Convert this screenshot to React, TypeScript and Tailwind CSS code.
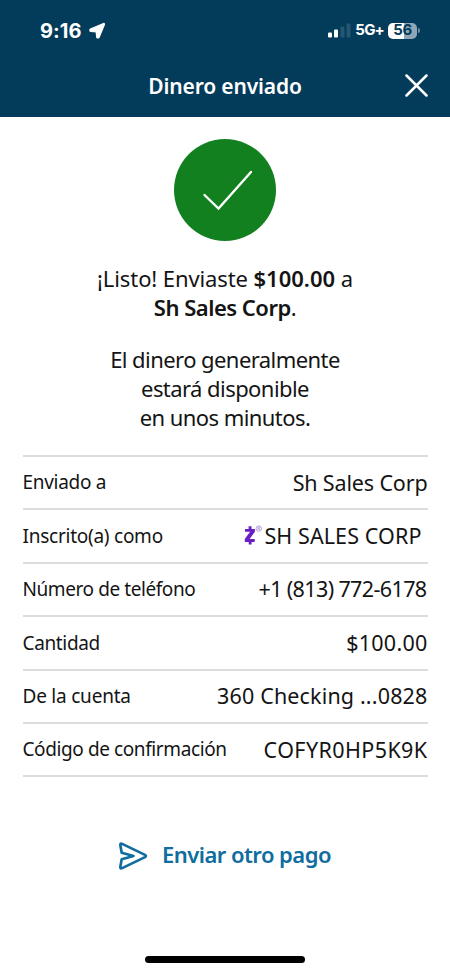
import type { ReactNode } from 'react'

interface DetailRow {
  label: string
  value: ReactNode
  labelClass: string
  valueClass: string
}

function ZelleMark() {
  return (
    <svg width="18" height="22" viewBox="0 0 18 22" className="mr-[2px] shrink-0">
      <path
        d="M1 3.9h3.6V1.2h2.9v2.7h3.4v2.9L5.6 14.1h5.1v2.8H7.6v2.7H4.7v-2.7H.8V14l5.3-7.2H1Z"
        fill="#6a1fc2"
      />
      <circle cx="14.8" cy="3.6" r="2.7" fill="none" stroke="#a98bd0" strokeWidth="0.8" />
      <path d="M14 5.2V2.2h1.1a.8.8 0 0 1 0 1.6h-1M15.1 3.8l.8 1.4" fill="none" stroke="#a98bd0" strokeWidth="0.7" />
    </svg>
  )
}

const rows: DetailRow[] = [
  { label: 'Enviado a', value: 'Sh Sales Corp', labelClass: 'tracking-[-0.3px]', valueClass: 'tracking-[-0.15px]' },
  {
    label: 'Inscrito(a) como',
    value: (
      <>
        <ZelleMark />
        SH SALES CORP
      </>
    ),
    labelClass: 'tracking-[-0.25px]',
    valueClass: 'pr-[6px] tracking-[0.1px]'
  },
  {
    label: 'Número de teléfono',
    value: '+1 (813) 772-6178',
    labelClass: 'tracking-[-0.42px]',
    valueClass: 'pr-px tracking-[-0.62px]'
  },
  { label: 'Cantidad', value: '$100.00', labelClass: 'tracking-[-0.35px]', valueClass: 'tracking-[0.25px]' },
  {
    label: 'De la cuenta',
    value: '360 Checking ...0828',
    labelClass: 'tracking-[-0.22px]',
    valueClass: 'tracking-[0.15px]'
  },
  {
    label: 'Código de confirmación',
    value: 'COFYR0HP5K9K',
    labelClass: 'tracking-[-0.4px]',
    valueClass: 'tracking-[0.4px]'
  }
]

function StatusBar() {
  return (
    <div className="flex h-[60px] items-center justify-between pt-px pr-[30px] pl-[40px] font-['Inter',sans-serif]">
      <div className="flex items-center">
        <span className="text-[20px] font-bold tracking-[0.1px]">9:16</span>
        <svg width="18" height="18" viewBox="0 0 18 18" className="ml-[6px]">
          <path
            d="M15.8 2.2 10.4 15.2 9.4 15.2 8.8 9.2 2.6 8.6 2.6 7.8Z"
            fill="#fff"
            stroke="#fff"
            strokeWidth="2.6"
            strokeLinejoin="round"
          />
        </svg>
      </div>
      <div className="flex items-center">
        <svg width="23" height="15" viewBox="0 0 23 15">
          <rect x="0" y="9.5" width="4" height="5" rx="1" fill="#fff" />
          <rect x="6" y="6.5" width="4" height="8" rx="1" fill="#fff" />
          <rect x="12.5" y="3.5" width="4" height="11" rx="1" fill="#265672" />
          <rect x="18.5" y="0.5" width="4" height="14" rx="1" fill="#265672" />
        </svg>
        <span className="ml-[4px] text-[15px] font-bold tracking-[-0.8px]">5G+</span>
        <div className="ml-[4px] flex h-4 w-[29px] items-center justify-center rounded-[5px] bg-[linear-gradient(90deg,#fff_56%,#8fa6b6_56%)] text-[15px] font-bold tracking-[-0.3px] text-[#033b5a]">
          56
        </div>
        <div className="ml-px h-[5px] w-[2px] rounded-r-full bg-[#6f8da1]" />
      </div>
    </div>
  )
}

export default function App() {
  return (
    <div className="flex h-[975px] w-[450px] flex-col bg-white font-['Noto_Sans',sans-serif] text-[#141414]">
      <header className="h-[117px] bg-[#033b5a] text-white">
        <StatusBar />
        <div className="grid h-[53px] grid-cols-[1fr_auto_1fr] items-center">
          <h1 className="col-start-2 text-[21px] font-semibold tracking-[-0.15px] whitespace-nowrap">
            Dinero enviado
          </h1>
          <button className="mr-[21px] justify-self-end" aria-label="Cerrar">
            <svg width="25" height="25" viewBox="0 0 25 25">
              <path d="M2.5 1.5l20 20M22.5 1.5l-20 20" stroke="#fff" strokeWidth="2.5" strokeLinecap="round" />
            </svg>
          </button>
        </div>
      </header>

      <main className="flex flex-col items-center">
        <div className="mt-[22px] size-[102px] rounded-full bg-[#138020]">
          <svg width="102" height="102" viewBox="0 0 102 102">
            <path
              d="M30.5 56 44.5 69.5 77 33"
              fill="none"
              stroke="#fff"
              strokeWidth="2.4"
              strokeLinecap="round"
            />
          </svg>
        </div>

        <div className="mt-[23px] text-center text-[22px] leading-[29px] whitespace-nowrap">
          <p className="tracking-[-0.1px]">
            ¡Listo! Enviaste <b className="font-semibold tracking-normal">$100.00</b> a
          </p>
          <p className="tracking-[-0.5px]">
            <b className="font-semibold">Sh Sales Corp</b>.
          </p>
          <div className="mt-[23px] tracking-[-0.56px]">
            <p>El dinero generalmente</p>
            <p>estará disponible</p>
            <p>en unos minutos.</p>
          </div>
        </div>

        <dl className="mt-[23px] w-[405px] border-t-2 border-[#dcdcdc] whitespace-nowrap">
          {rows.map((row) => (
            <div
              key={row.label}
              className="flex h-[53.4px] items-center justify-between border-b-2 border-[#dcdcdc]"
            >
              <dt className={`text-[19px] ${row.labelClass}`}>{row.label}</dt>
              <dd className={`flex items-center text-[21.5px] ${row.valueClass}`}>{row.value}</dd>
            </div>
          ))}
        </dl>

        <button className="mt-[61px] mr-px flex items-center text-[#0f6d9f]">
          <svg width="30" height="28" viewBox="0 0 30 28" className="mt-[3px]">
            <path
              d="M2.3 3.1 3.7 10.8 15.5 14 3.7 17.2 2.3 24.9Q2.2 27 4.2 26.1L27 15.1Q28.8 14 27 12.9L4.2 1.9Q2.2 1 2.3 3.1Z"
              fill="none"
              stroke="#0f6d9f"
              strokeWidth="2.7"
              strokeLinejoin="round"
            />
          </svg>
          <span className="ml-[14px] text-[22px] font-semibold tracking-[-0.55px] whitespace-nowrap">
            Enviar otro pago
          </span>
        </button>
      </main>

      <div className="mt-auto mb-[12px] h-[7px] w-[160px] self-center rounded-full bg-black" />
    </div>
  )
}
